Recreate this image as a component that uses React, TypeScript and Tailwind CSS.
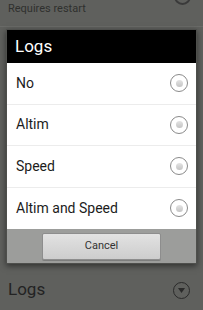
const options = ["No", "Altim", "Speed", "Altim and Speed"]

function Radio() {
  return (
    <div className="w-[18px] h-[18px] rounded-full border border-[#8a8a8a] bg-white flex items-center justify-center">
      <div className="w-[7px] h-[7px] rounded-full bg-gradient-to-b from-[#e4e4e4] to-[#c4c4c4]" />
    </div>
  )
}

export default function App() {
  return (
    <div
      className="w-[203px] h-[310px] overflow-hidden bg-[#5f605d] flex flex-col"
      style={{ fontFamily: "Roboto, 'Open Sans', sans-serif" }}
    >
      {/* Background setting row (cut off at top) */}
      <div className="h-[27px] flex items-start justify-between pl-[8px] pr-[12px] border-b border-[#6a6b68]">
        <span className="text-[11px] leading-none text-[#2f302e] mt-[3px]">Requires restart</span>
        <div className="w-[17px] h-[17px] rounded-full border-2 border-[#3a3a3a] -mt-[12px]" />
      </div>

      {/* Dialog */}
      <div className="mt-[2px] mx-[6px] border border-[#4e4f4c] shadow-[0_2px_6px_rgba(0,0,0,0.5)]">
        <div className="h-[33px] bg-black flex items-center pl-[8px]">
          <span className="text-[17px] text-white leading-none">Logs</span>
        </div>
        <div className="bg-white">
          {options.map((opt, i) => (
            <div
              key={opt}
              className={
                "h-[41.5px] flex items-center justify-between pl-[9px] pr-[8px] " +
                (i < options.length - 1 ? "border-b border-[#ececec]" : "")
              }
            >
              <span className="text-[14px] text-[#1c1c1c]">{opt}</span>
              <Radio />
            </div>
          ))}
        </div>
        <div className="h-[34px] bg-[#9c9d9b] flex items-center justify-center">
          <button className="w-[119px] h-[27px] rounded-[2px] border border-[#8d8d8d] bg-gradient-to-b from-[#e2e2e2] to-[#cdcdcd] text-[11px] text-[#333] shadow-[0_1px_0_rgba(0,0,0,0.2)]">
            Cancel
          </button>
        </div>
      </div>

      {/* Background row below dialog */}
      <div className="mt-auto h-[44px] flex items-center justify-between pl-[8px] pr-[13px] pt-[4px]">
        <span className="text-[17px] text-[#232323]">Logs</span>
        <div className="w-[17px] h-[17px] rounded-full border border-[#2a2a2a] flex items-center justify-center">
          <svg width="7" height="5" viewBox="0 0 7 5">
            <path d="M0 0 L7 0 L3.5 5 Z" fill="#2a2a2a" />
          </svg>
        </div>
      </div>
    </div>
  )
}
